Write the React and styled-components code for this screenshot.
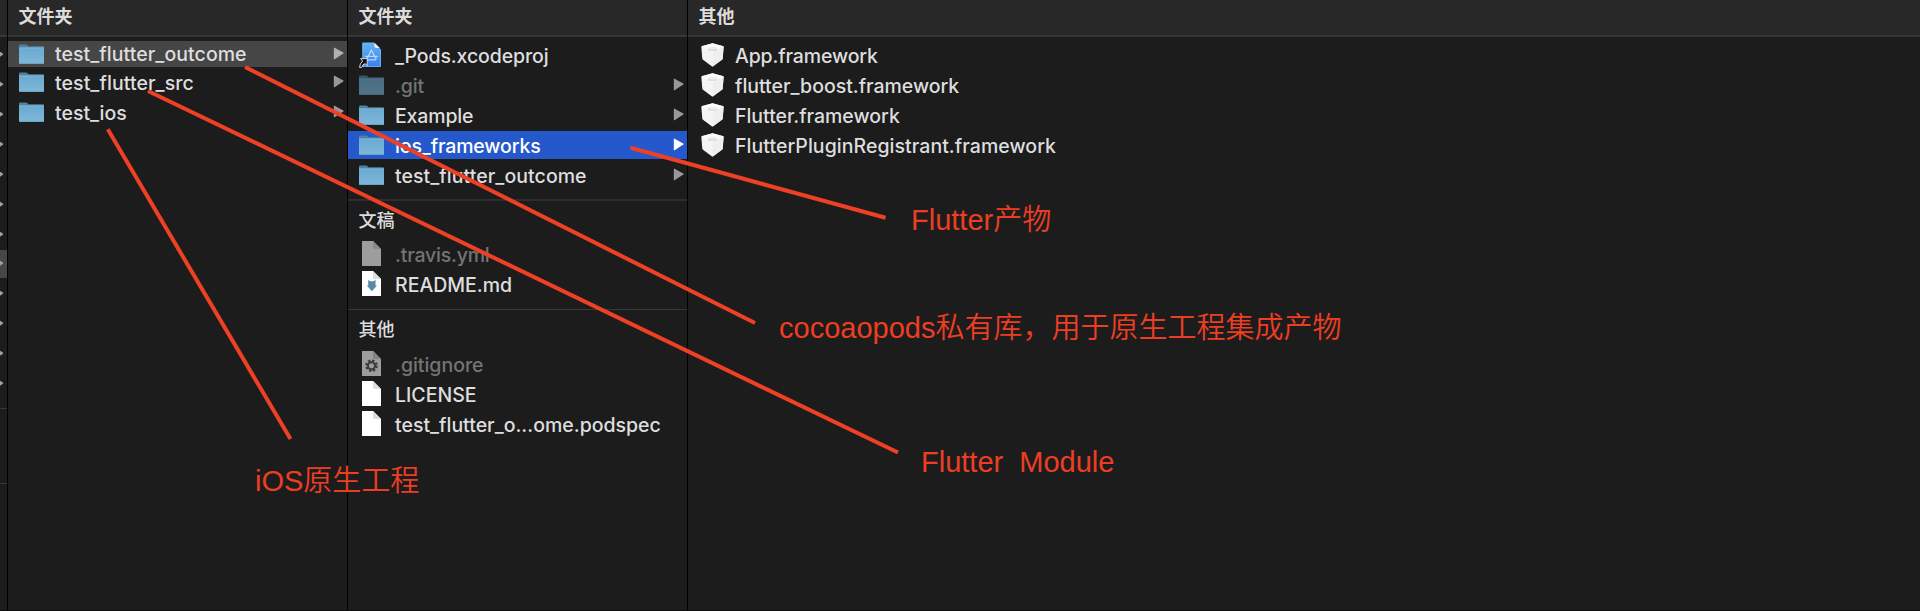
import React from "react";
import styled, { createGlobalStyle, css } from "styled-components";

const Global = createGlobalStyle`
  * { box-sizing: border-box; }
  body { margin: 0; background: #1c1c1c; }
`;

const Browser = styled.main`
  position: relative;
  display: flex;
  width: 1920px;
  height: 611px;
  overflow: hidden;
  background: #1c1c1c;
  border-bottom: 1px solid #0d0d0d;
  font-family: Inter, "Noto Sans CJK SC", sans-serif;
  color: #dededf;
`;

const Column = styled.section`
  flex: ${(p) => (p.$width ? `0 0 ${p.$width}px` : "1 1 0")};
  border-right: ${(p) => (p.$width ? "1px solid #000" : "0")};
  overflow: hidden;
`;

const Header = styled.header`
  height: 37px;
  padding: 0 0 1px 10.5px;
  display: flex;
  align-items: center;
  background: #282828;
  border-bottom: 2px solid #363636;
  font-size: 18px;
  font-weight: 700;
  line-height: 1;
  color: #dcdcdc;
`;

const List = styled.div`
  display: flex;
  flex-direction: column;
  gap: 1.87px;
  padding-top: ${(p) => p.$top ?? 4.4}px;
`;

const Group = styled.section`
  margin-top: ${(p) => p.$gap}px;
  border-top: ${(p) => p.$rule ?? 1}px solid ${(p) => (p.$rule === 2 ? "#2f2f2f" : "#383838")};
`;

const GroupTitle = styled.h2`
  margin: 0;
  padding: 10px 0 0 10.5px;
  font-size: 18px;
  line-height: 20px;
  font-weight: 500;
  color: #dcdcdc;
`;

const Row = styled.div`
  display: flex;
  align-items: center;
  height: ${(p) => p.$height ?? 28}px;
  padding: 0 3px 0 11px;
  color: ${(p) => (p.$dim ? "#747474" : "#dededf")};
  ${(p) => p.$state === "path" && css`background: #464646;`}
  ${(p) => p.$state === "selected" && css`background: #2559cb; color: #fff;`}
`;

const IconSlot = styled.span`
  flex: 0 0 25px;
  display: flex;
  justify-content: center;
  margin-right: 11px;
  opacity: ${(p) => (p.$dim ? 0.57 : 1)};
`;

const Name = styled.span`
  flex: 1;
  font-size: 19.5px;
  font-weight: 450;
  line-height: 28px;
  padding-top: ${(p) => p.$drop ?? 2.2}px;
  white-space: pre;
  letter-spacing: ${(p) => p.$track ?? 0}px;
`;

const EdgeColumn = styled(Column)`
  & ${Row} { padding: 0; }
`;

const EdgeLine = styled.div`
  height: 1px;
  margin-top: ${(p) => p.$gap}px;
  background: #383838;
`;

const Overlay = styled.svg`
  position: absolute;
  inset: 0;
`;

const Label = styled.span`
  position: absolute;
  left: ${(p) => p.$x}px;
  top: ${(p) => p.$y}px;
  font: 400 29px/36px "Liberation Sans", "Noto Sans CJK SC", sans-serif;
  white-space: pre;
  color: #ed3e23;
  & b { font-weight: 350; }
`;

const Folder = () => (
  <svg width="25" height="20" viewBox="0 0 25 20">
    <defs>
      <linearGradient id="folder" x1="0" y1="0" x2="0" y2="1">
        <stop offset="0" stopColor="#69a9d2" />
        <stop offset="1" stopColor="#80b8d9" />
      </linearGradient>
    </defs>
    <path d="M0 1.6Q0 .4 1.2.4H7Q7.8.4 8.4 1.1L9.4 2.3H24Q25 2.3 25 3.3V8H0Z" fill="#50829f" />
    <path d="M0 3.7H25V19Q25 20 24 20H1Q0 20 0 19Z" fill="url(#folder)" />
    <path d="M0 3.9H25" stroke="#8fc4e4" strokeWidth=".7" />
    <path d="M.3 19.4H24.7" stroke="#679bb9" strokeWidth=".8" />
  </svg>
);

const Doc = ({ fold = "#dedede", children }) => (
  <svg width="19" height="25" viewBox="0 0 19 25">
    <path d="M0 0H11L19 8V25H0Z" fill="#fff" />
    <path d="M11 0V6.5Q11 8 12.5 8H19Z" fill={fold} />
    {children}
  </svg>
);

const Markdown = () => (
  <Doc>
    <path d="M6.2 8.8L8 10.2H11.7L13.5 8.8V14.6H15L9.9 20.2L4.8 14.6H6.2Z" fill="#5889a8" />
  </Doc>
);

const Config = () => (
  <Doc fold="#d4d4d4">
    <circle cx="9.5" cy="14.7" r="5.3" fill="none" stroke="#505a5e" strokeWidth="2" strokeDasharray="2.4 1.76" />
    <circle cx="9.5" cy="14.7" r="3.6" fill="none" stroke="#505a5e" strokeWidth="2.2" />
  </Doc>
);

const Xcode = () => (
  <svg width="25" height="26" viewBox="0 0 25 26">
    <defs>
      <linearGradient id="xcode" x1="0" y1="0" x2="0" y2="1">
        <stop offset="0" stopColor="#67b4f3" />
        <stop offset="1" stopColor="#357ff0" />
      </linearGradient>
    </defs>
    <path d="M3.3.6H15L22 7.5V25H3.3Z" fill="url(#xcode)" />
    <path d="M4 2V24.4H21.3V7.5" fill="none" stroke="#83c3f7" strokeWidth=".7" />
    <path d="M15.5 .8V4.2Q15.5 6 17.3 6H20.8Z" fill="#e9f4ff" />
    <path d="M12.6 7.6L7.8 17.2M12 7.6L17.4 17.2M6.2 14.3H19M8.7 17.8H17" fill="none" stroke="#b5d9fc" strokeWidth="1.3" />
    <path d="M1.6 16.6H8.2V23.6L6.2 21.6Q3.4 22.4 2.6 25.4H.5Q.7 21.7 3.6 19Z" fill="#111" stroke="#e8e8e8" strokeWidth=".9" />
  </svg>
);

const BrickSlot = styled.span`
  display: flex;
  padding-left: 1px;
`;

const Brick = () => (
  <BrickSlot>
    <svg width="23" height="24" viewBox="0 0 23 24">
      <path d="M.3 4Q.3 3.3 1 3L10.6.4Q11.5.1 12.4.4L22 3Q22.8 3.3 22.7 4L21.7 15.6Q21.6 16.4 21 16.8L12.3 23.2Q11.5 23.7 10.7 23.2L2 16.8Q1.4 16.4 1.3 15.6Z" fill="#f4f4f4" />
      <path d="M.5 3.5L11.5 9.3L22.5 3.5L11.5.3Z" fill="#fbfbfb" />
      <path d="M11.5 9.3L22.6 3.6L21.6 16.2L11.5 23.5Z" fill="#efefef" />
      <ellipse cx="11.5" cy="6.3" rx="4.8" ry="1.8" fill="#dadada" />
      <ellipse cx="11.5" cy="5.2" rx="4.2" ry="1.4" fill="#ececec" />
    </svg>
  </BrickSlot>
);

const Arrow = ({ color = "#989898" }) => (
  <svg width="11" height="28" viewBox="0 0 11 28">
    <path d="M.8 8Q.8 7.3 1.6 7.7L10.3 12.6Q10.9 13.1 10.3 13.6L1.6 19.2Q.8 19.6.8 18.9Z" fill={color} />
  </svg>
);

const EdgeTip = () => (
  <svg width="4" height="28" viewBox="0 0 4 28">
    <path d="M0 10.8L2.9 12.6Q3.5 13.2 2.9 13.8L0 15.8Z" fill="#a0a0a0" />
  </svg>
);

const icons = { folder: Folder, doc: Doc, md: Markdown, config: Config, xcode: Xcode, brick: Brick };

const Item = ({ name, icon = "folder", dim, state, arrow, height, track, drop }) => {
  const Icon = icons[icon];
  return (
    <Row $dim={dim} $state={state} $height={height}>
      <IconSlot $dim={dim}><Icon /></IconSlot>
      <Name $track={track} $drop={drop}>{name}</Name>
      {arrow && <Arrow color={state === "selected" ? "#fff" : state === "path" ? "#b0b0b0" : undefined} />}
    </Row>
  );
};

const lines = [
  [245, 67, 755, 323],
  [148, 91, 898, 452.5],
  [107.8, 129.3, 290.5, 439],
  [630.5, 147.8, 885.5, 217.7],
];

export default function App() {
  return (
    <>
      <Global />
      <Browser>
        <EdgeColumn $width={8}>
          <Header />
          <List>
            {Array.from({ length: 12 }, (_, i) => (
              <Row key={i} $state={i === 7 ? "path" : undefined}><EdgeTip /></Row>
            ))}
          </List>
          <EdgeLine $gap={10} />
          <EdgeLine $gap={74} />
        </EdgeColumn>

        <Column $width={340}>
          <Header>文件夹</Header>
          <List $top={4}>
            <Item name="test_flutter_outcome" state="path" height={25.5} drop={1} track={0.06} arrow />
            <Item name="test_flutter_src" drop={1} track={0.08} arrow />
            <Item name="test_ios" drop={0.6} arrow />
          </List>
        </Column>

        <Column $width={340}>
          <Header>文件夹</Header>
          <List>
            <Item name="_Pods.xcodeproj" icon="xcode" drop={1.4} track={-0.12} />
            <Item name=".git" track={-0.1} dim arrow />
            <Item name="Example" track={-0.15} arrow />
            <Item name="ios_frameworks" state="selected" track={-0.14} arrow />
            <Item name="test_flutter_outcome" drop={1.4} track={0.06} arrow />
          </List>
          <Group $gap={10.4} $rule={2}>
            <GroupTitle>文稿</GroupTitle>
            <List $top={8.7}>
              <Item name=".travis.yml" icon="doc" track={-0.2} dim />
              <Item name="README.md" icon="md" />
            </List>
          </Group>
          <Group $gap={11.3}>
            <GroupTitle>其他</GroupTitle>
            <List $top={9.7}>
              <Item name=".gitignore" icon="config" drop={3} track={-0.02} dim />
              <Item name="LICENSE" icon="doc" drop={3} />
              <Item name="test_flutter_o...ome.podspec" icon="doc" drop={3} />
            </List>
          </Group>
        </Column>

        <Column>
          <Header>其他</Header>
          <List>
            <Item name="App.framework" icon="brick" drop={1.4} track={-0.14} />
            <Item name="flutter_boost.framework" icon="brick" track={-0.02} />
            <Item name="Flutter.framework" icon="brick" track={-0.02} />
            <Item name="FlutterPluginRegistrant.framework" icon="brick" track={0.05} />
          </List>
        </Column>

        <Overlay width="1920" height="611" viewBox="0 0 1920 611">
          {lines.map(([x1, y1, x2, y2]) => (
            <line key={x1} x1={x1} y1={y1} x2={x2} y2={y2} stroke="#ed4024" strokeWidth="4" />
          ))}
        </Overlay>
        <Label $x={911} $y={202}>Flutter<b>产物</b></Label>
        <Label $x={779} $y={310}>cocoaopods<b>私有库，用于原生工程集成产物</b></Label>
        <Label $x={921} $y={444}>Flutter  Module</Label>
        <Label $x={255} $y={463}>iOS<b>原生工程</b></Label>
      </Browser>
    </>
  );
}
